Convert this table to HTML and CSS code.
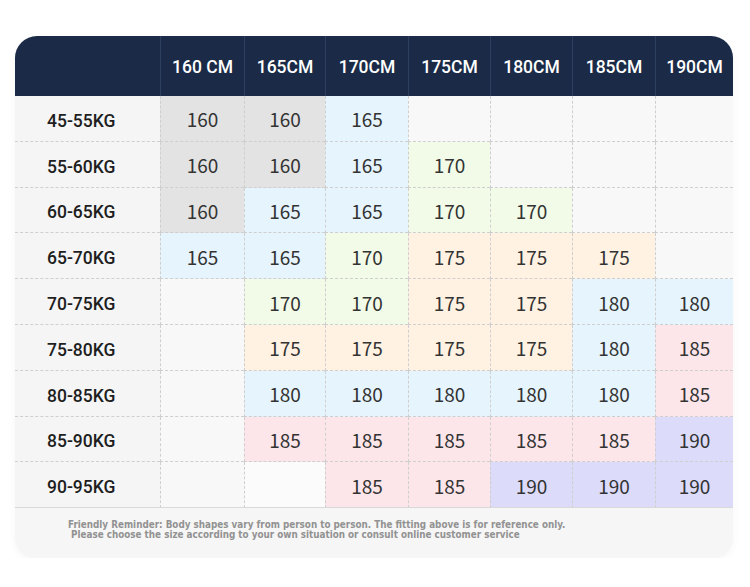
FILE: index.html
```html
<!DOCTYPE html>
<html>
<head>
<meta charset="utf-8">
<link rel="stylesheet" href="styles.css">
</head>
<body>
<div class="card">
  <div class="grid">
    <div class="hd first"></div>
    <div class="hd">160 CM</div>
    <div class="hd">165CM</div>
    <div class="hd">170CM</div>
    <div class="hd">175CM</div>
    <div class="hd">180CM</div>
    <div class="hd">185CM</div>
    <div class="hd">190CM</div>

    <div class="lb">45-55KG</div>
    <div class="c g">160</div><div class="c g">160</div><div class="c b">165</div><div class="c e"></div><div class="c e"></div><div class="c e"></div><div class="c e"></div>

    <div class="lb">55-60KG</div>
    <div class="c g">160</div><div class="c g">160</div><div class="c b">165</div><div class="c n">170</div><div class="c e"></div><div class="c e"></div><div class="c e"></div>

    <div class="lb">60-65KG</div>
    <div class="c g">160</div><div class="c b">165</div><div class="c b">165</div><div class="c n">170</div><div class="c n">170</div><div class="c e"></div><div class="c e"></div>

    <div class="lb">65-70KG</div>
    <div class="c b">165</div><div class="c b">165</div><div class="c n">170</div><div class="c o">175</div><div class="c o">175</div><div class="c o">175</div><div class="c e"></div>

    <div class="lb">70-75KG</div>
    <div class="c e"></div><div class="c n">170</div><div class="c n">170</div><div class="c o">175</div><div class="c o">175</div><div class="c b">180</div><div class="c b">180</div>

    <div class="lb">75-80KG</div>
    <div class="c e"></div><div class="c o">175</div><div class="c o">175</div><div class="c o">175</div><div class="c o">175</div><div class="c b">180</div><div class="c p">185</div>

    <div class="lb">80-85KG</div>
    <div class="c e"></div><div class="c b">180</div><div class="c b">180</div><div class="c b">180</div><div class="c b">180</div><div class="c b">180</div><div class="c p">185</div>

    <div class="lb">85-90KG</div>
    <div class="c e"></div><div class="c p">185</div><div class="c p">185</div><div class="c p">185</div><div class="c p">185</div><div class="c p">185</div><div class="c v">190</div>

    <div class="lb last">90-95KG</div>
    <div class="c e last"></div><div class="c w last"></div><div class="c p last">185</div><div class="c p last">185</div><div class="c v last">190</div><div class="c v last">190</div><div class="c v last">190</div>
  </div>
  <div class="note">
    <p class="l1">Friendly Reminder: Body shapes vary from person to person. The fitting above is for reference only.</p>
    <p class="l2">Please choose the size according to your own situation or consult online customer service</p>
  </div>
</div>
</body>
</html>
```

FILE: styles.css
```css
html, body {
  margin: 0;
  padding: 0;
  background: #ffffff;
}

.card {
  margin: 36px 0 0 15px;
  width: 718px;
  border-radius: 22px 22px 20px 20px;
  background: #f6f6f6;
  box-shadow: 0 2px 8px rgba(0, 0, 0, 0.04);
  overflow: hidden;
}

.grid {
  display: grid;
  grid-template-columns: 145px 84px 81px 83px 82px 82px 83px 78px;
  grid-template-rows: 60px repeat(9, 45.8px);
}

.hd {
  background: #1b2b47;
  color: #ffffff;
  font-family: Roboto, "DejaVu Sans", sans-serif;
  font-weight: 500;
  font-size: 17.5px;
  display: flex;
  align-items: center;
  justify-content: center;
  padding-top: 2px;
  box-sizing: border-box;
  border-left: 1px solid #2d3f5e;
}

.hd.first {
  border-left: none;
}

.lb {
  background: #f5f5f5;
  color: #1e1e1e;
  font-family: Roboto, "DejaVu Sans", sans-serif;
  font-weight: 500;
  font-size: 17.5px;
  display: flex;
  align-items: center;
  padding-left: 32px;
  padding-top: 5px;
  box-sizing: border-box;
  border-bottom: 1px dashed #cfcfcf;
}

.c {
  font-family: "Noto Sans CJK SC", "Noto Sans", sans-serif;
  font-size: 19px;
  color: #333333;
  display: flex;
  align-items: center;
  justify-content: center;
  padding-top: 1px;
  box-sizing: border-box;
  border-left: 1px dashed #cfcfcf;
  border-bottom: 1px dashed #cfcfcf;
}

.lb.last, .c.last {
  border-bottom: 1px solid #d9d9d9;
}

.g { background: #e3e3e3; }
.b { background: #e6f4fd; }
.n { background: #f1fbe7; }
.o { background: #fff2e2; }
.p { background: #fde6ea; }
.v { background: #dcdcfa; }
.e { background: #f8f8f8; }
.w { background: #fbfbfb; }

.note {
  height: 50px;
  padding: 12px 0 0 53px;
  box-sizing: border-box;
  font-family: "DejaVu Sans Condensed", "DejaVu Sans", sans-serif;
  font-weight: bold;
  font-size: 9.8px;
  color: #929292;
}

.note p {
  margin: 0;
  line-height: 9.5px;
}

.note .l2 {
  padding-left: 3px;
}
```
